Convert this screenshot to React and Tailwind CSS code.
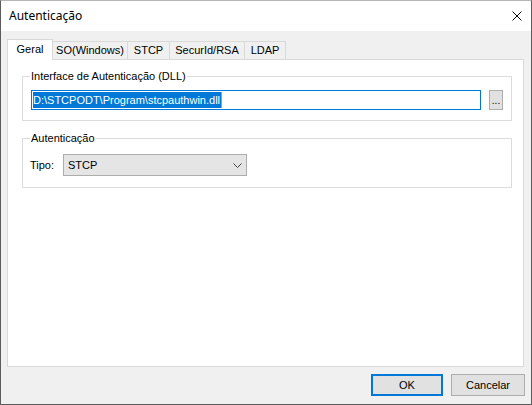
const tabs = [
  { label: 'SO(Windows)', w: 'w-[75px]' },
  { label: 'STCP', w: 'w-[42px]' },
  { label: 'SecurId/RSA', w: 'w-[75px]' },
  { label: 'LDAP', w: 'w-[41px]' },
]

function CloseIcon() {
  return (
    <svg width="10" height="10" viewBox="0 0 10 10" className="block">
      <path d="M0.5 0.5 L9.5 9.5 M9.5 0.5 L0.5 9.5" stroke="#111" strokeWidth="1" fill="none" />
    </svg>
  )
}

function Chevron() {
  return (
    <svg width="9" height="5" viewBox="0 0 9 5" className="block">
      <path d="M0.5 0.5 L4.5 4.5 L8.5 0.5" stroke="#444" strokeWidth="1" fill="none" />
    </svg>
  )
}

export default function App() {
  return (
    <div className="w-[532px] h-[405px] flex flex-col bg-[#f0f0f0] border border-[#5c5c5c] border-t-[#b5b5b5] text-[11px] text-black overflow-hidden font-['Liberation_Sans',Arial,sans-serif]">
      {/* title bar */}
      <div className="h-[30px] shrink-0 bg-white flex items-center justify-between pl-[8px] pr-[9px]">
        <span className="text-[12px] font-['Noto_Sans',sans-serif] text-[#000] leading-none">Autenticação</span>
        <CloseIcon />
      </div>

      <div className="flex-1 flex flex-col pl-[6px] pr-[7px] pt-[8px] pb-[8px]">
        {/* tabs */}
        <div className="h-[20px] flex items-end">
          <div className="relative z-10 -mb-px h-[21px] w-[46px] bg-white border border-b-0 border-[#d9d9d9] flex items-center justify-center pb-[2px]">
            Geral
          </div>
          {tabs.map((t) => (
            <div
              key={t.label}
              className={`h-[18px] ${t.w} border-t border-r border-[#d9d9d9] flex items-center justify-center`}
            >
              {t.label}
            </div>
          ))}
        </div>

        {/* tab panel */}
        <div className="h-[308px] bg-white border border-[#d9d9d9] pl-[14px] pr-[11px] pt-[16px]">
          <div className="relative h-[45px] border border-[#dcdcdc] pl-[8px] pt-[13px]">
            <span className="absolute left-[7px] -top-[7px] px-[1px] bg-white leading-[13px]">
              Interface de Autenticação (DLL)
            </span>
            <div className="flex items-center gap-[8px]">
              <div className="w-[450px] h-[20px] border border-[#0078d7] bg-white flex items-center pl-[1px]">
                <span className="bg-[#0078d7] text-white leading-[16px] pr-[1px] border-r border-[#f08a30]">
                  D:\STCPODT\Program\stcpauthwin.dll
                </span>
              </div>
              <div className="w-[14px] h-[20px] bg-[#e1e1e1] border border-[#adadad] flex items-end justify-center pb-[3px] leading-none text-[10px]">
                ...
              </div>
            </div>
          </div>

          <div className="relative mt-[17px] h-[50px] border border-[#dcdcdc] pl-[7px] pt-[15px]">
            <span className="absolute left-[7px] -top-[7px] px-[1px] bg-white leading-[13px]">
              Autenticação
            </span>
            <div className="flex items-center">
              <span className="w-[33px]">Tipo:</span>
              <div className="w-[184px] h-[22px] bg-[#e5e5e5] border border-[#adadad] flex items-center justify-between pl-[4px] pr-[4px]">
                <span>STCP</span>
                <Chevron />
              </div>
            </div>
          </div>
        </div>

        {/* footer */}
        <div className="mt-[7px] -mr-px flex justify-end gap-[8px]">
          <button className="w-[72px] h-[22px] bg-[#e1e1e1] border-2 border-[#0078d7] flex items-center justify-center">
            OK
          </button>
          <button className="w-[74px] h-[22px] bg-[#e1e1e1] border border-[#adadad] flex items-center justify-center">
            Cancelar
          </button>
        </div>
      </div>
    </div>
  )
}
